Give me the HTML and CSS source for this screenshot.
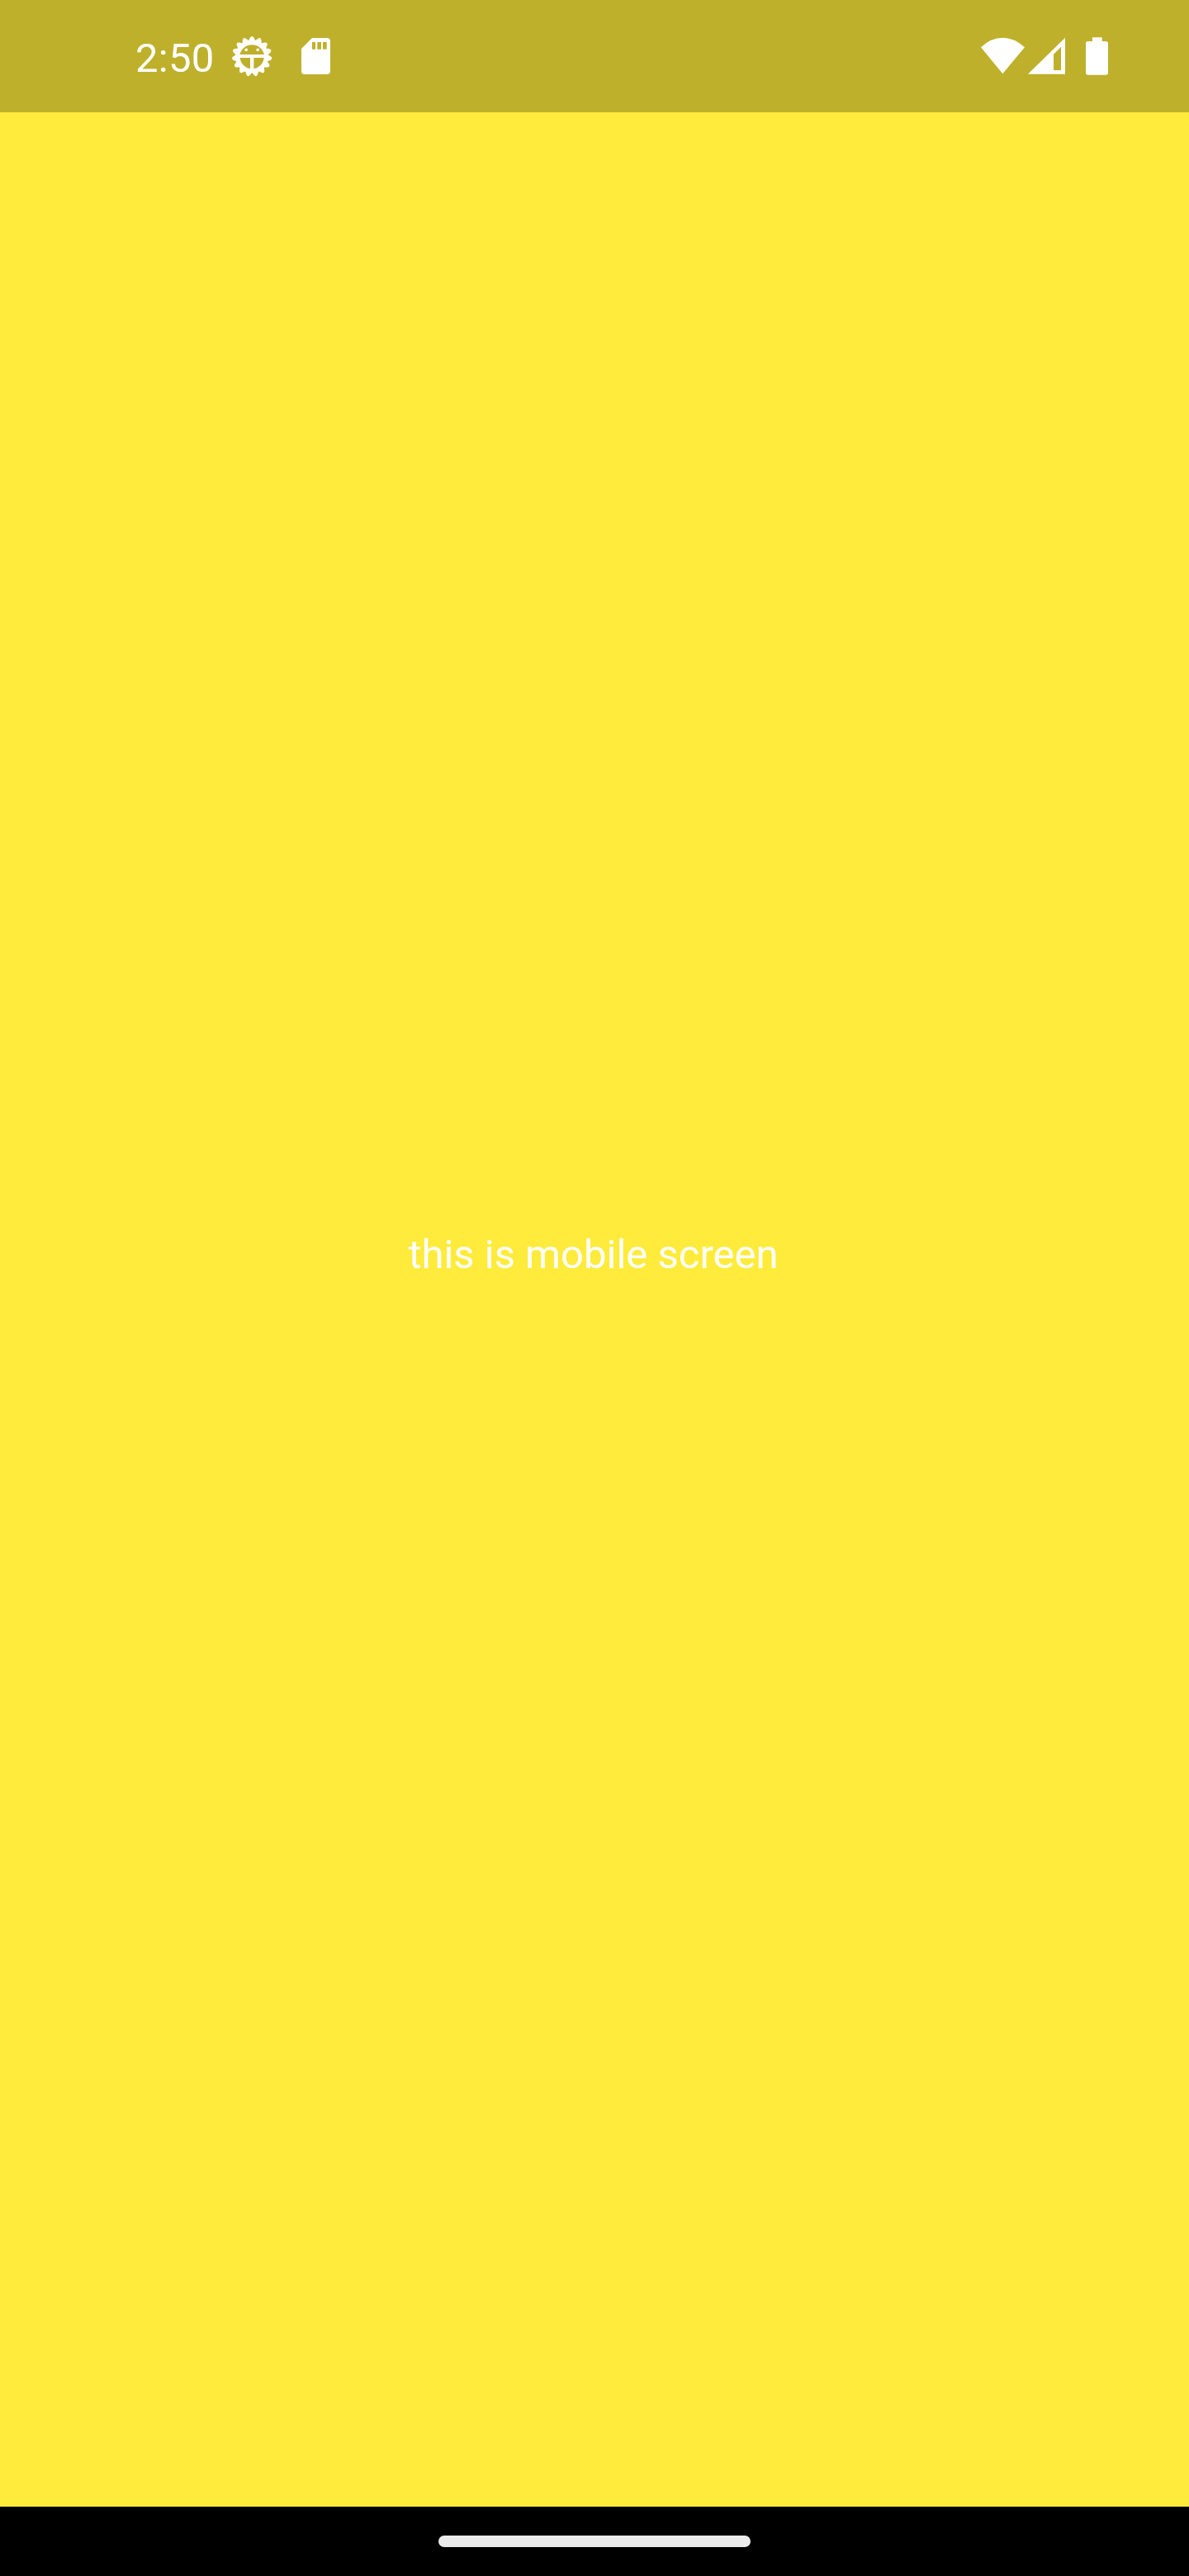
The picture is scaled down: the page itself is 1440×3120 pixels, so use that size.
FILE: index.html
```
<!DOCTYPE html>
<html lang="en">
<head>
<meta charset="utf-8">
<title>Mobile screen</title>
<link rel="stylesheet" href="styles.css">
</head>
<body>
<div class="screen">
  <header class="status-bar">
    <div class="status-left">
      <span class="clock">2:50</span>
      <svg class="icon-debug" viewBox="0 0 216 216">
        <g transform="translate(105.5 109)">
          <g id="teeth"></g>
          <path fill-rule="evenodd" d="M0-60A60 60 0 0 1 0 60A60 60 0 0 1 0-60ZM-44-7H44A45 45 0 0 0-44-7ZM-44 5A45 45 0 0 0-6.500 44.500V5ZM6.500 5V44.500A45 45 0 0 0 44 5Z"/>
          <circle cx="-21" cy="-24" r="5.500"/>
          <circle cx="21" cy="-24" r="5.500"/>
        </g>
      </svg>
      <svg class="icon-card" viewBox="0 0 216 216">
        <path fill-rule="evenodd" d="M84 42H138Q150 42 150 54V162Q150 174 138 174H57Q45 174 45 162V81ZM84 57V83H96V57ZM103 57V83H117V57ZM123 57V83H137V57Z"/>
      </svg>
    </div>
    <div class="status-right">
      <svg class="icon-network" viewBox="0 0 360 210">
        <path d="M24 70Q60 35 103 35T183 70L103 166Z"/>
        <path fill-rule="evenodd" d="M330 35V167H195ZM315 68L288 95V153H315Z"/>
      </svg>
      <svg class="icon-battery" viewBox="0 0 210 210">
        <path d="M99 34H134V48H148Q156 48 156 56V162Q156 170 148 170H83Q75 170 75 162V56Q75 48 83 48H99Z"/>
      </svg>
    </div>
  </header>
  <main class="content"><p class="message">this is mobile screen</p></main>
  <footer class="nav-bar"><div class="handle"></div></footer>
</div>
<script src="teeth.js"></script>
</body>
</html>
```
FILE: styles.css
```
body {
  margin: 0;
  font-family: Roboto, sans-serif;
  color: #fff;
}
.screen {
  display: flex;
  flex-direction: column;
  width: 1440px;
  height: 3120px;
  background: #ffeb3b;
}
.status-bar {
  display: flex;
  justify-content: space-between;
  height: 136px;
  background: #bfb02c;
}
.status-left,
.status-right {
  display: flex;
  align-items: flex-start;
}
.status-left {
  padding-left: 164px;
}
.status-right {
  padding: 34px 80px 0 0;
}
svg {
  display: block;
  fill: #fff;
}
.clock {
  width: 106px;
  margin-top: 42px;
  font-size: 49px;
  line-height: 58px;
  letter-spacing: 0.25px;
}
.icon-debug {
  width: 72px;
  height: 72px;
  margin-top: 32px;
}
.icon-card {
  width: 72px;
  height: 72px;
  margin: 32px 0 0 8px;
}
.icon-network {
  width: 120px;
  height: 70px;
}
.icon-battery {
  width: 70px;
  height: 70px;
  margin-left: -10px;
}
.content {
  display: flex;
  flex: 1;
  align-items: center;
  justify-content: center;
  padding: 0 3px 132px 0;
}
.message {
  margin: 0;
  font-size: 49px;
  line-height: 58px;
  white-space: nowrap;
}
.nav-bar {
  display: flex;
  align-items: center;
  justify-content: center;
  height: 84px;
  background: #000;
}
.handle {
  width: 378px;
  height: 14px;
  border-radius: 7px;
  background: #ebebeb;
}
```
FILE: teeth.js
```
const group = document.getElementById("teeth");
for (let i = 0; i < 15; i++) {
  const tooth = document.createElementNS("http://www.w3.org/2000/svg", "path");
  tooth.setAttribute("d", "M-13 56L-6 69Q0 77 6 69L13 56Z");
  tooth.setAttribute("transform", `rotate(${i * 24 + 12})`);
  group.appendChild(tooth);
}
```
